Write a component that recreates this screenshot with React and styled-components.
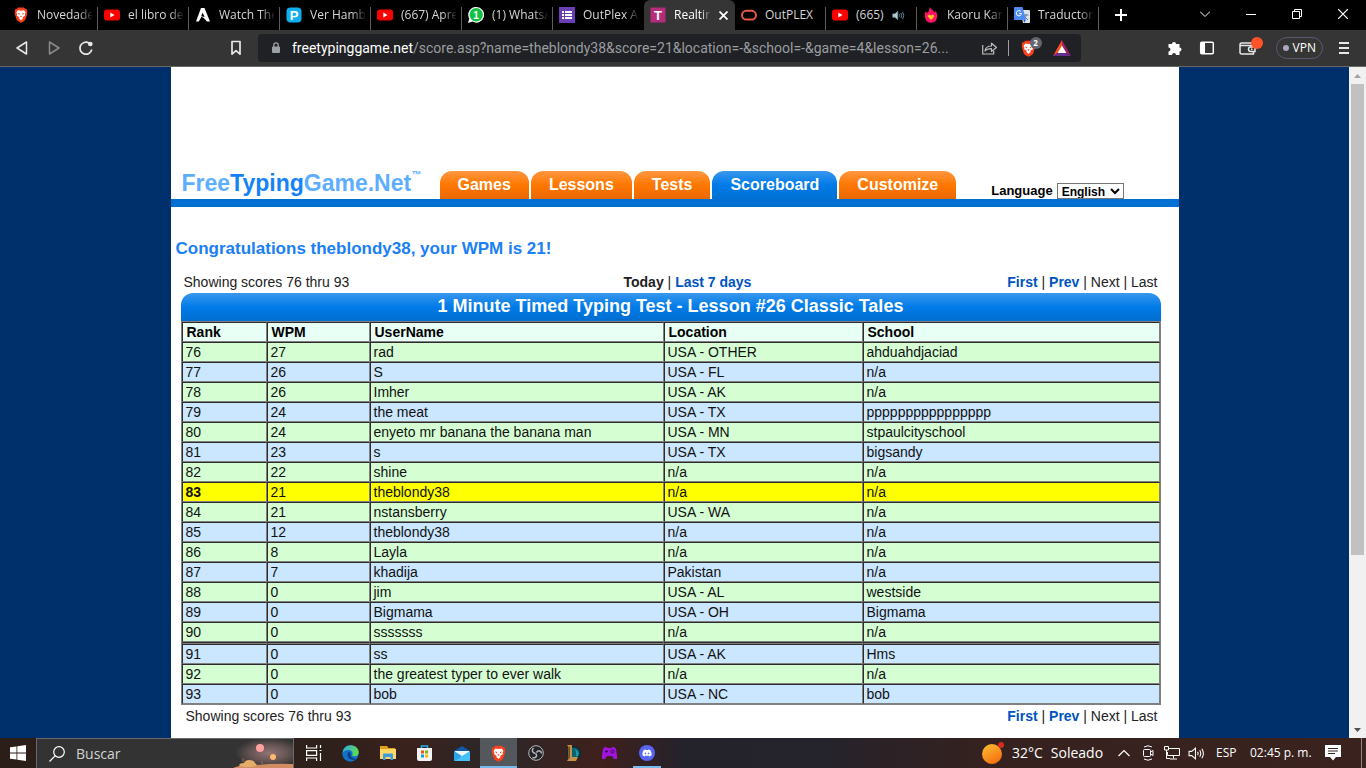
import React from 'react'
import styled, { createGlobalStyle } from 'styled-components'
import { FaDiscord } from 'react-icons/fa'

const uiFont = '"Open Sans", "Noto Sans", sans-serif'
const pageFont = '"Liberation Sans", Arial, sans-serif'

const GlobalStyle = createGlobalStyle`
  * { box-sizing: border-box; }
  body { margin: 0; overflow: hidden; font-family: ${pageFont}; }
  button { margin: 0; padding: 0; border: 0; background: none; color: inherit; font: inherit; }
  svg { display: block; flex: none; }
`

const Screen = styled.div`
  display: flex;
  flex-direction: column;
  height: 100vh;
`

/* ---------- tab strip ---------- */

const TabStrip = styled.div`
  display: flex;
  height: 30px;
  padding-left: 7px;
  background: #000;
  color: #d6d6d6;
  font: 12px/30px ${uiFont};
`

const Tab = styled.div`
  position: relative;
  display: flex;
  align-items: center;
  gap: 8px;
  flex: 0 1 91px;
  min-width: 0;
  padding: 0 6px;
  background: ${props => props.$active ? '#353535' : 'transparent'};
  border-radius: ${props => props.$active ? '6px 6px 0 0' : '0'};
  color: ${props => props.$active ? '#fff' : 'inherit'};

  &::after {
    content: '';
    position: absolute;
    right: 0;
    top: 7px;
    bottom: 0;
    width: 1px;
    background: ${props => props.$line ? '#5c5c5c' : 'transparent'};
  }
`

const TabTitle = styled.span`
  flex: ${props => props.$audio ? 'none' : '1'};
  overflow: hidden;
  white-space: nowrap;
  mask-image: ${props => props.$full ? 'none' : 'linear-gradient(to right, #000 75%, rgba(0, 0, 0, 0.1))'};
`

const WindowButtons = styled.div`
  display: flex;
  margin-left: auto;
`

const WindowButton = styled.button`
  display: flex;
  align-items: center;
  justify-content: center;
  width: 46px;
  height: 28px;
  color: #fff;
`

const TabButton = styled(WindowButton)`
  width: ${props => props.$small ? '11px' : '44px'};
  height: 30px;
`

/* ---------- toolbar ---------- */

const Toolbar = styled.div`
  display: flex;
  align-items: center;
  height: 37px;
  padding: 0 17px 0 14px;
  background: #353535;
  border-bottom: 1px solid #6a6866;
  color: #e8e8e8;
`

const NavButtons = styled.div`
  display: flex;
  flex: none;
  gap: 16px;
  width: 214px;
`

const AddressBar = styled.div`
  display: flex;
  align-items: center;
  flex: 1;
  min-width: 0;
  height: 28px;
  margin: 0 86px 0 14px;
  padding: 0 10px 0 12px;
  background: #202124;
  border-radius: 4px;
`

const Url = styled.div`
  flex: 1;
  min-width: 0;
  margin-left: 10px;
  overflow: hidden;
  white-space: nowrap;
  color: #9a9da1;
  font: 14px/28px Roboto, ${uiFont};

  b { color: #fff; font-weight: 400; }
`

const Separator = styled.span`
  width: 1px;
  height: 16px;
  margin: 0 11px;
  background: #a0a0a0;
`

const Badged = styled.button`
  position: relative;
  display: flex;
`

const Shields = styled(Badged)`
  margin-right: 16px;
`

const Wallet = styled(Badged)`
  margin: 0 4px 0 8px;
`

const Count = styled.span`
  position: absolute;
  top: -3px;
  left: 10px;
  width: 12px;
  height: 12px;
  border-radius: 6px;
  background: #62656f;
  color: #fff;
  font: 700 8px/12px ${uiFont};
  text-align: center;
`

const Dot = styled.span`
  position: absolute;
  top: -3px;
  left: 12px;
  width: 12px;
  height: 12px;
  border-radius: 6px;
  background: #ff5429;
`

const Extensions = styled.div`
  display: flex;
  align-items: center;
  flex: none;
  gap: 16px;
`

const Vpn = styled.button`
  display: flex;
  align-items: center;
  gap: 4px;
  height: 22px;
  padding: 0 6px;
  border: 1px solid #5b5870;
  border-radius: 11px;
  color: #fff;
  font: 12px/20px ${uiFont};

  &::before {
    content: '';
    width: 6px;
    height: 6px;
    border-radius: 3px;
    background: #aaa6c2;
  }
`

/* ---------- web page ---------- */

const Viewport = styled.div`
  display: flex;
  flex: 1;
  min-height: 0;
  background: #00306b;
`

const PageArea = styled.div`
  flex: 1;
  overflow: hidden;
`

const Page = styled.main`
  max-width: 1008px;
  min-height: 100%;
  margin: 0 auto;
  background: #fff;
`

const Header = styled.header`
  display: flex;
  align-items: flex-end;
  height: 140px;
  padding-left: 11px;
  border-bottom: 8px solid #0070d3;
`

const Logo = styled.a`
  display: flex;
  width: 258px;
  color: #5eaeff;
  font-weight: 700;
  font-size: 23px;
  line-height: 32px;
  text-decoration: none;

  b { color: #1583f5; }
  sup { font-size: 10px; line-height: 16px; }
`

const Menu = styled.nav`
  display: flex;
  align-items: flex-end;
  gap: 2px;
`

const MenuItem = styled.a`
  height: 28px;
  padding: 0 18px;
  border-radius: 12px 12px 0 0;
  background: ${props => props.$active
    ? 'linear-gradient(#3a97ec, #007be8 50%, #0070d3)'
    : 'linear-gradient(#ff9742, #ff7800 50%, #e96800)'};
  color: #fff;
  font-weight: 700;
  font-size: 16px;
  line-height: 28px;
  text-decoration: none;
`

const Language = styled.label`
  display: flex;
  align-items: center;
  gap: 4px;
  margin-left: 35px;
  font-weight: 700;
  font-size: 13px;
  line-height: 16px;

  select {
    width: 67px;
    height: 16px;
    padding: 0;
    border: 1px solid #767676;
    border-radius: 0;
    background: #fff;
    color: #000;
    font: 700 12px/14px ${pageFont};
  }
`

const Congrats = styled.h1`
  margin: 32px 0 0;
  padding-left: 5px;
  color: #1a80f5;
  font-size: 17px;
  line-height: 20px;
`

const ScoreInfo = styled.div`
  display: grid;
  grid-template-columns: 440px 1fr auto;
  margin-top: ${props => props.$top ? '13px' : '1px'};
  padding: 0 21px 0 ${props => props.$top ? '13px' : '15px'};
  color: #222;
  font-size: 14px;
  line-height: 20px;

  a { color: #0053c0; font-weight: 700; text-decoration: none; }
`

const Board = styled.section`
  margin: 1px 18px 0 10px;
`

const BoardTitle = styled.h2`
  margin: 0;
  padding-bottom: 2px;
  border-radius: 12px 12px 0 0;
  background: linear-gradient(#3a97ec, #007be8 50%, #006dcf);
  color: #fff;
  font-size: 18px;
  line-height: 26px;
  text-align: center;
`

const Scores = styled.table`
  width: 100%;
  border: 1px solid #808080;
  border-spacing: 0;
  table-layout: fixed;
  color: #111;
  font-size: 14px;
  line-height: 16px;
  text-align: left;

  th, td {
    padding: 1px 3px;
    border: 1px solid;
    border-color: #2c2c2c #808080 #808080 #2c2c2c;
  }
  th { padding-left: 4px; background: #e8fff5; color: #000; }
`

const colors = { green: '#d5ffd3', blue: '#cbe6ff', yellow: '#ffff00' }

const ScoreRow = styled.tr`
  background: ${props => colors[props.$color]};

  td:first-child { font-weight: ${props => props.$color === 'yellow' ? 700 : 400}; }
`

const GapRow = styled.tr`
  td { padding: 0; line-height: 0; }
`

const ScrollBar = styled.div`
  display: flex;
  flex-direction: column;
  align-items: center;
  width: 17px;
  background: #f1f1f1;
`

const ScrollArrow = styled.button`
  display: flex;
  align-items: center;
  justify-content: center;
  width: 17px;
  height: 17px;
`

const ScrollTrack = styled.div`
  flex: 1;

  &::before {
    content: '';
    display: block;
    width: 13px;
    height: 74%;
    background: #c1c1c1;
  }
`

/* ---------- taskbar ---------- */

const Taskbar = styled.footer`
  display: flex;
  height: 30px;
  background: linear-gradient(to right, #2b1d18, #2e201b 24%, #3a211c 30%, #2b2729 36%, #3f201c 44%, #24222b 50%, #25232c 60%, #35211f 72%, #3a231e);
  color: #fff;
  font: 12px/30px ${uiFont};
`

const Start = styled.button`
  display: flex;
  align-items: center;
  justify-content: center;
  width: 36px;
`

const Search = styled.label`
  display: flex;
  align-items: center;
  gap: 11px;
  width: 258px;
  margin-right: 1px;
  padding-left: 12px;
  border: 1px solid #6a6a6a;
  border-bottom: 0;
  background: #333;

  input {
    flex: 1;
    min-width: 0;
    padding: 0;
    border: 0;
    background: none;
    font: 14px/28px ${uiFont};
  }
  input::placeholder { color: #d2d2d2; opacity: 1; }
`

const TaskButton = styled.button`
  display: flex;
  align-items: center;
  justify-content: center;
  width: 37px;
  border-bottom: 2px solid ${props => props.$active ? '#76b9ed' : 'transparent'};
  border-top: 2px solid transparent;
  background: ${props => props.$active ? '#54575b' : 'none'} padding-box border-box;
`

const OpenButton = styled(TaskButton)`
  width: 28px;
  margin: 0 5px;
  border-bottom-color: #76b9ed;
`

const Tray = styled.div`
  display: flex;
  align-items: center;
  margin-left: auto;
  padding-right: 4px;
  white-space: nowrap;
`

const Weather = styled.button`
  display: flex;
  align-items: center;
  gap: 8px;
  width: 134px;
  font-size: 14px;
`

const TrayIcons = styled.div`
  display: flex;
  align-items: center;
  gap: 8px;
  width: 100px;
`

const TrayText = styled.span`
  width: ${props => props.$w}px;
`

const TrayEnd = styled.div`
  display: flex;
  align-items: center;
  height: 30px;
  padding-right: 20px;
  border-right: 1px solid #8f8582;
`

/* ---------- icons ---------- */

const BraveIcon = ({ size = 16 }) => (
  <svg width={size} height={size} viewBox="0 0 16 16">
    <path d="M5 .6h6l1.300 1.400 1.500.2.600 2-.3 1 .3 1.200-2 6.200-1.200 1.400L8 15.700 4.800 14l-1.200-1.400-2-6.200.3-1.200-.3-1 .6-2L3.700 2z" fill="#fb3f1c" />
    <path d="M5 3.300l3 .5 3-.5 1.700 2.300-.8 1.500.2 1.600-2.600 1.600.6 1L8 13.200 5.900 11.300l.6-1L3.900 8.700l.2-1.600-.8-1.500z" fill="#fff" />
    <path d="M4.600 6l2.200.6-.3 1.400zM11.400 6l-2.200.6.3 1.400zM6.800 9.200L8 8.700l1.200.5L8 10z" fill="#fb3f1c" />
  </svg>
)

const YoutubeIcon = () => (
  <svg width="16" height="16" viewBox="0 0 16 16">
    <rect y="2.500" width="16" height="11" rx="3" fill="#f00" />
    <path d="M6.300 5.600v4.800L10.500 8z" fill="#fff" />
  </svg>
)

const AnimeIcon = () => (
  <svg width="16" height="16" viewBox="0 0 16 16">
    <path d="M6 1h3.500L15 14.500h-3L8.800 11 6.500 9.700 3.800 14.500H1z" fill="#fff" />
    <path d="M7.600 5.500L6.200 9.200l3.400.8z" fill="#000" />
  </svg>
)

const LetterIcon = ({ letter, color, radius = 0 }) => (
  <svg width="16" height="16" viewBox="0 0 16 16">
    <rect x=".5" y=".5" width="15" height="15" rx={radius} fill={color} />
    <text x="8" y="12.500" textAnchor="middle" fill="#fff" fontFamily="Liberation Sans, sans-serif" fontWeight="700" fontSize="13">{letter}</text>
  </svg>
)

const WhatsappIcon = () => (
  <svg width="16" height="16" viewBox="0 0 16 16">
    <path d="M8.200 0a7.800 7.800 0 1 1-3.700 14.600L0 16l1.300-4.300A7.800 7.800 0 0 1 8.200 0z" fill="#fff" />
    <circle cx="8.200" cy="7.800" r="6.700" fill="#12c143" />
    <text x="8" y="11.500" textAnchor="middle" fill="#fff" fontFamily="Liberation Sans, sans-serif" fontWeight="700" fontSize="10">1</text>
  </svg>
)

const FormsIcon = () => (
  <svg width="16" height="16" viewBox="0 0 16 16">
    <rect width="16" height="16" fill="#6a3fb5" />
    <path d="M3 4h2v2H3zM6 4h7v2H6zM3 7h2v2H3zM6 7h7v2H6zM3 10h2v2H3zM6 10h7v2H6z" fill="#fff" />
  </svg>
)

const OracleIcon = () => (
  <svg width="16" height="16" viewBox="0 0 16 16">
    <rect x="1" y="3.800" width="14" height="8.800" rx="4.400" fill="none" stroke="#ea5a47" strokeWidth="2" />
  </svg>
)

const FlameIcon = () => (
  <svg width="16" height="16" viewBox="0 0 16 16">
    <path d="M6.500 0c1 2 4 3 4.700 5.500l1.600-1.500c1 2 1.700 4 1.200 6.500A6 6 0 0 1 2.200 11C1.500 8.500 2 6.500 2.600 4.500L4.700 6C6 4 6.700 2 6.500 0z" fill="#ff1464" />
    <path d="M8 13L4.800 9.500c0-2 2.300-2.300 3.200-.8.900-1.500 3.200-1.200 3.200.8z" fill="#ffc91f" />
  </svg>
)

const TranslateIcon = () => (
  <svg width="16" height="16" viewBox="0 0 16 16">
    <path d="M6 3h9a1 1 0 0 1 1 1v11a1 1 0 0 1-1 1H9z" fill="#dfe3ea" />
    <path d="M9.500 8h5M12 7v1c0 2-1 3.500-2.500 4.500M10.500 9.500L14 13" stroke="#667b8c" fill="none" />
    <path d="M1 0h7.500L12 13H1a1 1 0 0 1-1-1V1a1 1 0 0 1 1-1z" fill="#4c8bf5" />
    <path d="M9.500 13H12l-2 3z" fill="#2f5fc2" />
    <path d="M7 4.700A2.600 2.600 0 1 0 7.500 6.500H5.200" stroke="#fff" fill="none" />
  </svg>
)

const SpeakerIcon = ({ size = 17, color = '#fff', fill = 'none' }) => (
  <svg width={size} height={size} viewBox="0 0 16 16" fill="none" stroke={color}>
    <path d="M1 6h2.500L7 3v10l-3.500-3H1z" fill={fill} />
    <path d="M9 6.500q1 1.500 0 3M11 5q2 3 0 6M13 3.500q3 4.500 0 9" />
  </svg>
)

const BatIcon = () => (
  <svg width="18" height="16" viewBox="0 0 18 16">
    <path d="M9 0L0 16l9-6z" fill="#ff4a1c" />
    <path d="M9 0l9 16-9-6z" fill="#9e1f63" />
    <path d="M0 16h18L9 10z" fill="#662d91" />
    <path d="M9 5.500L13.300 13H4.700z" fill="#fff" />
  </svg>
)

const SearchArt = () => (
  <svg width="62" height="29" viewBox="0 0 62 29">
    <defs>
      <radialGradient id="dusk">
        <stop offset="0" stopColor="#927373" />
        <stop offset="0.550" stopColor="#665454" />
        <stop offset="1" stopColor="#333" />
      </radialGradient>
    </defs>
    <ellipse cx="38" cy="14" rx="34" ry="15" fill="url(#dusk)" />
    <circle cx="29" cy="9" r="4" fill="#ffa0a0" />
    <circle cx="42" cy="18" r="3" fill="#ffb870" />
    <path d="M2 29q10-4 24-3 18-2 36-1v4z" fill="#d28c62" />
    <path d="M8 26q1-2 5-2 1-3 5-3 5 0 6 3l2 2q-2 2-9 2-8 0-9-2z" fill="#e5ae68" />
    <path d="M12 19v4M31 22v3" stroke="#a06a55" />
  </svg>
)

const EdgeIcon = () => (
  <svg width="17" height="17" viewBox="0 0 17 17">
    <defs>
      <linearGradient id="edge" x1="0" y1="0" x2="1" y2=".4">
        <stop offset="0" stopColor="#2aa8e8" />
        <stop offset="1" stopColor="#5fdb55" />
      </linearGradient>
    </defs>
    <circle cx="8.500" cy="8.500" r="8.200" fill="#1272ca" />
    <path d="M.5 8C1 3 4.500.3 8.700.3c5 0 8 3.700 8 6.700 0 3-2.200 4.200-4.400 4.200-1.800 0-2.500-.8-2-1.500C11.500 7.500 9.500 5 6.500 5 3.500 5 1 6.500.5 8z" fill="url(#edge)" />
    <path d="M6.200 7.500c-2 2.500 0 7.500 5.300 7.300 1.500 0 2.800-.6 3.800-1.300-3.500 1-7.800-1.500-6.600-4.500.4-1-1.500-2.800-2.500-1.500z" fill="#0b3f83" />
  </svg>
)

const FolderIcon = () => (
  <svg width="16" height="14" viewBox="0 0 16 14">
    <path d="M0 0h7l1.500 2H15v5H0z" fill="#e3a119" />
    <path d="M0 3h16v10H0z" fill="#ffd764" />
    <path d="M3 14V8.500a1 1 0 0 1 1-1h8a1 1 0 0 1 1 1V14h-2.500v-3h-5v3z" fill="#3f9be0" />
  </svg>
)

const StoreIcon = () => (
  <svg width="15" height="16" viewBox="0 0 15 16">
    <path d="M4.500 4V1h6v3" fill="none" stroke="#28b0ea" strokeWidth="1.500" />
    <path d="M0 3h15v11a2 2 0 0 1-2 2H2a2 2 0 0 1-2-2z" fill="#f4f4f4" />
    <path d="M4 5.500h3v3H4z" fill="#f25022" />
    <path d="M8 5.500h3v3H8z" fill="#7fba00" />
    <path d="M4 9.500h3v3H4z" fill="#00a4ef" />
    <path d="M8 9.500h3v3H8z" fill="#ffb900" />
  </svg>
)

const MailIcon = () => (
  <svg width="16" height="15" viewBox="0 0 16 15">
    <path d="M0 5l8-5 8 5v10H0z" fill="#0f5aa8" />
    <path d="M1 5h14v6H1z" fill="#f2f7fb" />
    <path d="M0 5l8 5-8 5z" fill="#2ba5ec" />
    <path d="M16 5L0 15h16z" fill="#45c0f8" />
  </svg>
)

const ObsIcon = () => (
  <svg width="16" height="16" viewBox="0 0 16 16" fill="none" stroke="#b9b9b9">
    <circle cx="8" cy="8" r="7.300" fill="#24222a" />
    <path d="M7.500 8.500C4 8 3.500 5 5.500 3M8.500 7.500c2-3 5-1.500 5 1M8 8.500c1.500 3-.5 5-3.500 4" strokeWidth="1.500" />
  </svg>
)

const LeagueIcon = () => (
  <svg width="16" height="16" viewBox="0 0 16 16">
    <circle cx="9" cy="8" r="6.300" fill="#0b6270" stroke="#0b2830" strokeWidth="1.500" />
    <path d="M9 4q3 2 2 7h2q2-5-4-7z" fill="#1f9cab" />
    <path d="M2 0h5v12h6l-2 4H2l1.500-2V2z" fill="#c39245" />
    <path d="M4.500 1.500v12" stroke="#785323" />
  </svg>
)

const GamepadIcon = () => (
  <svg width="15" height="12" viewBox="0 0 15 12">
    <path d="M3 0h2v1h5V0h2l2 2 1 6v4h-3l-2-3H5l-2 3H0V8l1-6z" fill="#a313e0" />
    <path d="M3 4.500h3M4.500 3v3" stroke="#35114f" />
    <circle cx="10.500" cy="4.500" r="1.500" fill="none" stroke="#35114f" />
  </svg>
)

const DiscordIcon = () => (
  <svg width="16" height="16" viewBox="0 0 16 16">
    <circle cx="8" cy="8" r="8" fill="#5865f2" />
    <FaDiscord x="3" y="3" size="10" color="#fff" />
  </svg>
)

/* ---------- data ---------- */

const tabs = [
  { title: 'Novedades', icon: <BraveIcon /> },
  { title: 'el libro de la', icon: <YoutubeIcon /> },
  { title: 'Watch The', icon: <AnimeIcon /> },
  { title: 'Ver Hambre', icon: <LetterIcon letter="P" color="#0eb1ee" radius={4} /> },
  { title: '(667) Apren', icon: <YoutubeIcon /> },
  { title: '(1) WhatsApp', icon: <WhatsappIcon /> },
  { title: 'OutPlex Ass', icon: <FormsIcon />, line: false },
  { title: 'Realtime', icon: <LetterIcon letter="T" color="#b52c7b" />, active: true },
  { title: 'OutPLEX', icon: <OracleIcon />, full: true },
  { title: '(665)', icon: <YoutubeIcon />, full: true, audio: true },
  { title: 'Kaoru Kane', icon: <FlameIcon /> },
  { title: 'Traductor de', icon: <TranslateIcon /> },
]

const scores = [
  [76, 27, 'rad', 'USA - OTHER', 'ahduahdjaciad'],
  [77, 26, 'S', 'USA - FL', 'n/a'],
  [78, 26, 'Imher', 'USA - AK', 'n/a'],
  [79, 24, 'the meat', 'USA - TX', 'pppppppppppppppp'],
  [80, 24, 'enyeto mr banana the banana man', 'USA - MN', 'stpaulcityschool'],
  [81, 23, 's', 'USA - TX', 'bigsandy'],
  [82, 22, 'shine', 'n/a', 'n/a'],
  [83, 21, 'theblondy38', 'n/a', 'n/a'],
  [84, 21, 'nstansberry', 'USA - WA', 'n/a'],
  [85, 12, 'theblondy38', 'n/a', 'n/a'],
  [86, 8, 'Layla', 'n/a', 'n/a'],
  [87, 7, 'khadija', 'Pakistan', 'n/a'],
  [88, 0, 'jim', 'USA - AL', 'westside'],
  [89, 0, 'Bigmama', 'USA - OH', 'Bigmama'],
  [90, 0, 'sssssss', 'n/a', 'n/a'],
  [91, 0, 'ss', 'USA - AK', 'Hms'],
  [92, 0, 'the greatest typer to ever walk', 'n/a', 'n/a'],
  [93, 0, 'bob', 'USA - NC', 'bob'],
]

const rowColor = (rank) => {
  if (rank === 83) return 'yellow'
  return rank % 2 ? 'blue' : 'green'
}

const Pager = () => (
  <span><a href="#first">First</a> | <a href="#prev">Prev</a> | Next | Last</span>
)

const BrowserTabs = () => (
  <TabStrip>
    {tabs.map((tab, i) => (
      <Tab key={i} $active={tab.active} $line={!tab.active && tab.line !== false}>
        {tab.icon}
        <TabTitle $full={tab.full} $audio={tab.audio}>{tab.title}</TabTitle>
        {tab.audio && <SpeakerIcon size={13} color="#6fa3b5" fill="#c4c4c4" />}
        {tab.active && (
          <TabButton $small aria-label="Close tab">
            <svg width="9" height="9" viewBox="0 0 9 9" stroke="currentColor" strokeWidth="1.800"><path d="M.5.5l8 8M8.500.5l-8 8" /></svg>
          </TabButton>
        )}
      </Tab>
    ))}
    <TabButton aria-label="New tab">
      <svg width="12" height="12" viewBox="0 0 12 12" stroke="currentColor" strokeWidth="2"><path d="M0 6h12M6 0v12" /></svg>
    </TabButton>
    <WindowButtons>
      <WindowButton aria-label="Search tabs">
        <svg width="10" height="6" viewBox="0 0 10 6" fill="none" stroke="currentColor"><path d="M0 .5l5 5 5-5" /></svg>
      </WindowButton>
      <WindowButton aria-label="Minimize">
        <svg width="10" height="10" viewBox="0 0 10 10" stroke="currentColor"><path d="M0 5.500h10" /></svg>
      </WindowButton>
      <WindowButton aria-label="Restore">
        <svg width="10" height="10" viewBox="0 0 10 10" fill="none" stroke="currentColor"><path d="M.5 2.500h7v7h-7zM2.500 2.500v-2h7v7h-2" /></svg>
      </WindowButton>
      <WindowButton aria-label="Close">
        <svg width="10" height="10" viewBox="0 0 10 10" stroke="currentColor" strokeWidth="1.200"><path d="M0 0l10 10M10 0L0 10" /></svg>
      </WindowButton>
    </WindowButtons>
  </TabStrip>
)

const BrowserToolbar = () => (
  <Toolbar>
    <NavButtons>
      <button aria-label="Back">
        <svg width="16" height="16" viewBox="0 0 16 16" fill="none" stroke="currentColor" strokeWidth="1.500" strokeLinejoin="round"><path d="M12.500 2v12L3 8z" /></svg>
      </button>
      <button aria-label="Forward">
        <svg width="16" height="16" viewBox="0 0 16 16" fill="none" stroke="#8a8a8a" strokeWidth="1.500" strokeLinejoin="round"><path d="M3.500 2v12L13 8z" /></svg>
      </button>
      <button aria-label="Reload">
        <svg width="16" height="16" viewBox="0 0 16 16" fill="none" stroke="currentColor" strokeWidth="1.700"><path d="M13.800 9.500A6 6 0 1 1 11 3" /><circle cx="12.300" cy="4" r="1.500" fill="currentColor" /></svg>
      </button>
    </NavButtons>
    <button aria-label="Bookmark this page">
      <svg width="16" height="16" viewBox="0 0 16 16" fill="none" stroke="currentColor" strokeWidth="1.700" strokeLinejoin="round"><path d="M4 1.500h8v12.700l-4-3.500-4 3.500z" /></svg>
    </button>
    <AddressBar>
      <svg width="12" height="14" viewBox="0 0 12 14"><path d="M3 5.500h6a1 1 0 0 1 1 1V11a1 1 0 0 1-1 1H3a1 1 0 0 1-1-1V6.500a1 1 0 0 1 1-1z" fill="#9aa0a6" /><path d="M3.800 6V4a2.200 2.200 0 0 1 4.400 0v2" fill="none" stroke="#9aa0a6" strokeWidth="1.300" /></svg>
      <Url><b>freetypinggame.net</b>/score.asp?name=theblondy38&amp;score=21&amp;location=-&amp;school=-&amp;game=4&amp;lesson=26...</Url>
      <button aria-label="Share">
        <svg width="15" height="14" viewBox="0 0 15 14" fill="none" stroke="#bdbdbd" strokeWidth="1.200"><path d="M.7 4v9h11v-3" /><path d="M3 10c.5-3.500 3-5 6.500-5V2.200l5 4.300-5 4V7.700C6.500 7.700 4.500 8 3 10z" strokeLinejoin="round" /></svg>
      </button>
      <Separator />
      <Shields aria-label="Brave Shields">
        <BraveIcon size={17} />
        <Count>2</Count>
      </Shields>
      <button aria-label="Brave Rewards"><BatIcon /></button>
    </AddressBar>
    <Extensions>
      <button aria-label="Extensions">
        <svg width="16" height="16" viewBox="0 0 16 16"><path d="M1.500 4H5a2 2 0 1 1 4 0h3.500v3.500a2 2 0 1 1 0 4V15H9a2 2 0 1 0-4 0H1.500v-3.500a2 2 0 1 0 0-4z" fill="#fff" /></svg>
      </button>
      <button aria-label="Sidebar">
        <svg width="16" height="16" viewBox="0 0 16 16" fill="none" stroke="#fff" strokeWidth="1.500"><rect x="1.700" y="2.200" width="12.600" height="11.600" rx="1" /><path d="M2 2.500h4v11H2z" fill="#fff" stroke="none" /></svg>
      </button>
      <Wallet aria-label="Wallet">
        <svg width="17" height="16" viewBox="0 0 17 16" fill="none" stroke="currentColor" strokeWidth="1.500"><path d="M13.500 5V3H2.500a1.500 1.500 0 0 0-1.500 1.500v8A1.500 1.500 0 0 0 2.500 14h12v-2.500M1.500 5.500h13V7" /><path d="M16 7h-4.300a2.200 2.200 0 0 0 0 4.400H16zM12 9.200h1.500" /></svg>
        <Dot />
      </Wallet>
      <Vpn>VPN</Vpn>
      <button aria-label="Menu">
        <svg width="10" height="12" viewBox="0 0 10 12" stroke="currentColor" strokeWidth="2"><path d="M0 1h10M0 6h10M0 11h10" /></svg>
      </button>
    </Extensions>
  </Toolbar>
)

const Scoreboard = () => (
  <Board>
    <BoardTitle>1 Minute Timed Typing Test - Lesson #26 Classic Tales</BoardTitle>
    <Scores>
      <colgroup>
        <col width="85" />
        <col width="103" />
        <col width="294" />
        <col width="199" />
        <col />
      </colgroup>
      <thead>
        <tr>
          <th>Rank</th>
          <th>WPM</th>
          <th>UserName</th>
          <th>Location</th>
          <th>School</th>
        </tr>
      </thead>
      <tbody>
        {scores.map((row) => (
          <React.Fragment key={row[0]}>
            {row[0] === 91 && <GapRow><td /><td /><td /><td /><td /></GapRow>}
            <ScoreRow $color={rowColor(row[0])}>
              {row.map((cell, i) => <td key={i}>{cell}</td>)}
            </ScoreRow>
          </React.Fragment>
        ))}
      </tbody>
    </Scores>
  </Board>
)

const WindowsTaskbar = () => (
  <Taskbar>
    <Start aria-label="Start">
      <svg width="16" height="16" viewBox="0 0 16 16" fill="#fff"><path d="M0 2.300L6.500 1.400v6.200H0zM7.300 1.300L16 0v7.600H7.300zM0 8.400h6.500v6.200L0 13.700zM7.300 8.400H16V16l-8.700-1.300z" /></svg>
    </Start>
    <Search>
      <svg width="16" height="16" viewBox="0 0 16 16" fill="none" stroke="#fff" strokeWidth="1.200"><circle cx="10" cy="6" r="5.300" /><path d="M6.300 9.700L.5 15.500" /></svg>
      <input aria-label="Buscar" placeholder="Buscar" />
      <SearchArt />
    </Search>
    <TaskButton aria-label="Task view">
      <svg width="16" height="16" viewBox="0 0 16 16" fill="none" stroke="#fff" strokeWidth="1.200"><path d="M.6 0v3h10V0M.6 16v-3h10v3M.6 5.600h10v4.800H.6zM14.500 0v3M14.500 8v8M13.500 5.500h2" /></svg>
    </TaskButton>
    <TaskButton aria-label="Edge"><EdgeIcon /></TaskButton>
    <TaskButton aria-label="Files"><FolderIcon /></TaskButton>
    <TaskButton aria-label="Store"><StoreIcon /></TaskButton>
    <TaskButton aria-label="Mail"><MailIcon /></TaskButton>
    <TaskButton aria-label="Brave" $active><BraveIcon size={17} /></TaskButton>
    <TaskButton aria-label="OBS"><ObsIcon /></TaskButton>
    <TaskButton aria-label="League"><LeagueIcon /></TaskButton>
    <TaskButton aria-label="Games"><GamepadIcon /></TaskButton>
    <OpenButton aria-label="Discord"><DiscordIcon /></OpenButton>
    <Tray>
      <Weather>
        <svg width="22" height="24" viewBox="0 0 22 24">
          <defs>
            <linearGradient id="sun" x1="0" y1="0" x2=".6" y2="1"><stop offset="0" stopColor="#fcc132" /><stop offset="1" stopColor="#f57212" /></linearGradient>
          </defs>
          <circle cx="10" cy="13" r="10" fill="url(#sun)" />
          <circle cx="19" cy="4" r="3" fill="#d92c20" />
        </svg>
        <span>32°C</span>
        <span>Soleado</span>
      </Weather>
      <TrayIcons>
        <svg width="16" height="8" viewBox="0 0 16 8" fill="none" stroke="#fff" strokeWidth="1.200"><path d="M2.500 7L8 1.500 13.500 7" /></svg>
        <svg width="16" height="16" viewBox="0 0 16 16" fill="none" stroke="#fff"><rect x="3.500" y="4.500" width="7" height="7" rx="1" /><path d="M10.500 7l2.500-1.500v5L10.500 9M4 2q4-2.500 8 0M4 14q4 2.500 8 0" /></svg>
        <svg width="16" height="14" viewBox="0 0 16 14" fill="none" stroke="#fff"><path d="M4.500 2.500h11v7H3.500V6M9.500 9.500v3M6 13h7M.5.500h4V4h-4zM2.500 4v8.500H6" /></svg>
        <SpeakerIcon />
      </TrayIcons>
      <TrayText $w={34}>ESP</TrayText>
      <TrayText $w={75}>02:45 p. m.</TrayText>
      <TrayEnd>
        <svg width="16" height="16" viewBox="0 0 16 16"><path d="M0 0h16v12h-5l-3 3.500L5 12H0z" fill="#fff" /><path d="M3 3.500h10M3 6h10M3 8.500h7" stroke="#38231f" /></svg>
      </TrayEnd>
    </Tray>
  </Taskbar>
)

const App = () => {
  return (
    <Screen>
      <GlobalStyle />
      <BrowserTabs />
      <BrowserToolbar />
      <Viewport>
        <PageArea>
          <Page>
            <Header>
              <Logo href="#home">Free<b>Typing</b>Game.Net<sup>™</sup></Logo>
              <Menu>
                <MenuItem href="#games">Games</MenuItem>
                <MenuItem href="#lessons">Lessons</MenuItem>
                <MenuItem href="#tests">Tests</MenuItem>
                <MenuItem href="#scoreboard" $active>Scoreboard</MenuItem>
                <MenuItem href="#customize">Customize</MenuItem>
              </Menu>
              <Language>
                Language
                <select defaultValue="English">
                  <option>English</option>
                </select>
              </Language>
            </Header>
            <Congrats>Congratulations theblondy38, your WPM is 21!</Congrats>
            <ScoreInfo $top>
              <span>Showing scores 76 thru 93</span>
              <span><b>Today</b> | <a href="#week">Last 7 days</a></span>
              <Pager />
            </ScoreInfo>
            <Scoreboard />
            <ScoreInfo>
              <span>Showing scores 76 thru 93</span>
              <span />
              <Pager />
            </ScoreInfo>
          </Page>
        </PageArea>
        <ScrollBar>
          <ScrollArrow aria-label="Scroll up">
            <svg width="7" height="4" viewBox="0 0 7 4"><path d="M0 4l3.500-4L7 4z" fill="#a3a3a3" /></svg>
          </ScrollArrow>
          <ScrollTrack />
          <ScrollArrow aria-label="Scroll down">
            <svg width="7" height="4" viewBox="0 0 7 4"><path d="M0 0l3.500 4L7 0z" fill="#505050" /></svg>
          </ScrollArrow>
        </ScrollBar>
      </Viewport>
      <WindowsTaskbar />
    </Screen>
  )
}

export default App
